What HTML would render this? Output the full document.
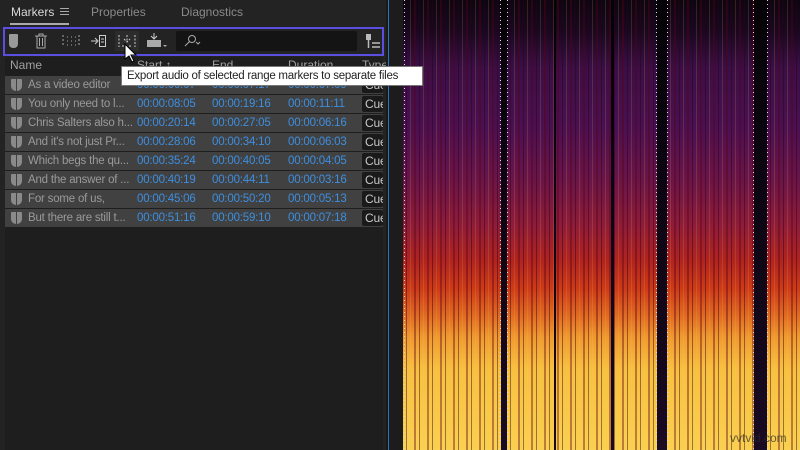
<!DOCTYPE html>
<html><head><meta charset="utf-8"><style>
*{margin:0;padding:0;box-sizing:border-box}
body{width:800px;height:450px;overflow:hidden;background:#232323;font-family:"Liberation Sans",sans-serif;position:relative}
.abs{position:absolute}
.tab{top:5px;font-size:12px;color:#8a8a8a}
.tbl{left:5px;top:57px;width:378px;height:393px;background:#1e1e1e}
.row{position:absolute;left:5px;width:378px;height:18px;background:#414141;font-size:11.5px;line-height:18px;letter-spacing:-0.2px}
.row .n{position:absolute;left:23px;color:#9a9a9a;white-space:nowrap}
.row .t{position:absolute;color:#3d8fe0}
.row .c{position:absolute;left:357px;top:1px;width:21px;height:16px;background:#1a1a1a;color:#c8c8c8;font-size:12px;line-height:16px;padding-left:3px;overflow:hidden;border-radius:2px}
.row .ic{position:absolute;left:6px;top:3px;width:11px;height:12px;background:#8a8a8a;border-radius:1px 1px 5px 5px}
.row .ic:after{content:"";position:absolute;left:5px;top:0;width:1px;height:12px;background:#414141}
.spec{left:403px;top:0;width:397px;height:450px;
background:linear-gradient(to bottom,#0d0610 0%,#1a0820 7%,#3a0f45 15%,#4a1050 28%,#6a1548 40%,#8e1c38 50%,#b0241f 58%,#cc3a18 64%,#e06a22 70%,#f09a30 75%,#f8c040 82%,#fad050 100%)}
.stripes{left:403px;top:0;width:397px;height:450px;
background:repeating-linear-gradient(90deg,rgba(0,0,0,0) 0 3px,rgba(40,0,30,.45) 3px 4px,rgba(0,0,0,0) 4px 7px,rgba(255,200,80,.15) 7px 8px,rgba(0,0,0,0) 8px 11px,rgba(90,0,20,.4) 11px 13px)}
.gap{top:0;height:450px;background:linear-gradient(to bottom,#050305,#0a0510 40%,#1a0a22 100%)}
.dot{top:0;height:450px;width:1px;background:repeating-linear-gradient(to bottom,#ddd 0 1px,transparent 1px 4px)}
</style></head><body>
<div class="abs tab" style="left:11px;color:#d8d8d8">Markers</div>
<div class="abs" style="left:60px;top:8px;width:9px;height:1px;background:#aaa;box-shadow:0 3px 0 #aaa,0 6px 0 #aaa"></div>
<div class="abs" style="left:10px;top:23px;width:59px;height:2px;background:#aaa"></div>
<div class="abs tab" style="left:91px">Properties</div>
<div class="abs tab" style="left:181px">Diagnostics</div>
<div class="abs" style="left:3px;top:27px;width:381px;height:29px;border:2px solid #5a4fe0"></div>
<div class="abs" style="left:9px;top:34px;width:9px;height:14px;background:#9a9a9a;border-radius:1px 1px 4px 4px"></div>
<svg class="abs" style="left:34px;top:33px" width="14" height="16"><path d="M1 3h12M5 3V1h4v2M3 3v12h8V3M5.5 5v8M8.5 5v8" stroke="#aaa" fill="none"/></svg>
<svg class="abs" style="left:62px;top:34px" width="18" height="14"><path d="M1 1v12M17 1v12M5 3h1M9 3h1M13 3h1M5 7h1M9 7h1M13 7h1M5 11h1M9 11h1M13 11h1" stroke="#aaa" stroke-dasharray="2 2" fill="none"/></svg>
<svg class="abs" style="left:90px;top:34px" width="18" height="14"><path d="M1 7h6M5 4l3 3-3 3" stroke="#ccc" fill="none"/><rect x="9.5" y="1.5" width="6" height="11" stroke="#ccc" fill="none"/><path d="M11 5h3M11 8h3" stroke="#ccc"/></svg>
<div class="abs" style="left:115px;top:31px;width:24px;height:20px;background:#2c2c2c"></div>
<svg class="abs" style="left:118px;top:34px" width="18" height="14"><path d="M1 1v12M17 1v12M9 1v7M6 5l3 3 3-3M4 12h10" stroke="#ccc" stroke-dasharray="2 1.5" fill="none"/></svg>
<svg class="abs" style="left:146px;top:32px" width="22" height="17"><path d="M8 1v6M5 4l3 3 3-3" stroke="#ccc" fill="none"/><rect x="1" y="8" width="14" height="7" fill="#aaa"/><path d="M17 13l2 2 2-2" fill="#aaa"/></svg>
<div class="abs" style="left:176px;top:31px;width:181px;height:20px;background:#141414;border-radius:2px"></div>
<svg class="abs" style="left:182px;top:34px" width="20" height="14"><circle cx="10" cy="5" r="3.5" stroke="#aaa" fill="none"/><path d="M7.5 7.5L3 12M14 8l2 2 2-2" stroke="#aaa" fill="none"/></svg>
<svg class="abs" style="left:365px;top:34px" width="16" height="16"><rect x="1" y="0" width="5" height="6" fill="#bbb"/><path d="M3.5 6v8M7 9h8M7 13h8" stroke="#bbb" stroke-width="1.5"/></svg>
<div class="tbl abs"></div>
<div class="abs" style="left:10px;top:58px;font-size:12px;color:#a0a0a0">Name</div>
<div class="abs" style="left:137px;top:58px;font-size:12px;color:#a0a0a0">Start ↑</div>
<div class="abs" style="left:212px;top:58px;font-size:12px;color:#a0a0a0">End</div>
<div class="abs" style="left:288px;top:58px;font-size:12px;color:#a0a0a0">Duration</div>
<div class="abs" style="left:362px;top:58px;font-size:12px;color:#a0a0a0">Type</div>
<div class="row" style="top:76px"><i class="ic"></i><span class="n">As a video editor</span><span class="t" style="left:132px">00:00:00:07</span><span class="t" style="left:207px">00:00:07:17</span><span class="t" style="left:283px">00:00:07:09</span><span class="c">Cue</span></div>
<div class="row" style="top:95px"><i class="ic"></i><span class="n">You only need to l...</span><span class="t" style="left:132px">00:00:08:05</span><span class="t" style="left:207px">00:00:19:16</span><span class="t" style="left:283px">00:00:11:11</span><span class="c">Cue</span></div>
<div class="row" style="top:114px"><i class="ic"></i><span class="n">Chris Salters also h...</span><span class="t" style="left:132px">00:00:20:14</span><span class="t" style="left:207px">00:00:27:05</span><span class="t" style="left:283px">00:00:06:16</span><span class="c">Cue</span></div>
<div class="row" style="top:133px"><i class="ic"></i><span class="n">And it's not just Pr...</span><span class="t" style="left:132px">00:00:28:06</span><span class="t" style="left:207px">00:00:34:10</span><span class="t" style="left:283px">00:00:06:03</span><span class="c">Cue</span></div>
<div class="row" style="top:152px"><i class="ic"></i><span class="n">Which begs the qu...</span><span class="t" style="left:132px">00:00:35:24</span><span class="t" style="left:207px">00:00:40:05</span><span class="t" style="left:283px">00:00:04:05</span><span class="c">Cue</span></div>
<div class="row" style="top:171px"><i class="ic"></i><span class="n">And the answer of ...</span><span class="t" style="left:132px">00:00:40:19</span><span class="t" style="left:207px">00:00:44:11</span><span class="t" style="left:283px">00:00:03:16</span><span class="c">Cue</span></div>
<div class="row" style="top:190px"><i class="ic"></i><span class="n">For some of us,</span><span class="t" style="left:132px">00:00:45:06</span><span class="t" style="left:207px">00:00:50:20</span><span class="t" style="left:283px">00:00:05:13</span><span class="c">Cue</span></div>
<div class="row" style="top:209px"><i class="ic"></i><span class="n">But there are still t...</span><span class="t" style="left:132px">00:00:51:16</span><span class="t" style="left:207px">00:00:59:10</span><span class="t" style="left:283px">00:00:07:18</span><span class="c">Cue</span></div>
<div class="abs" style="left:386px;top:0;width:3px;height:450px;background:#1a1a1a"></div>
<div class="abs" style="left:388px;top:0;width:1px;height:450px;background:#2f6fc0"></div>
<div class="abs" style="left:389px;top:0;width:14px;height:450px;background:#1c1c1c"></div>
<div class="abs spec"></div>
<div class="abs stripes"></div>
<div class="abs gap" style="left:501px;width:6px"></div>
<div class="abs gap" style="left:554px;width:2px"></div>
<div class="abs gap" style="left:611px;width:3px"></div>
<div class="abs gap" style="left:657px;width:10px"></div>
<div class="abs gap" style="left:754px;width:13px"></div>
<div class="abs dot" style="left:404px"></div>
<div class="abs dot" style="left:500px"></div>
<div class="abs dot" style="left:507px"></div>
<div class="abs dot" style="left:656px"></div>
<div class="abs dot" style="left:667px"></div>
<div class="abs dot" style="left:753px"></div>
<div class="abs dot" style="left:767px"></div>
<div class="abs" style="left:730px;top:431px;font-size:12px;color:rgba(40,40,40,.7)">vvtvid.com</div>
<div class="abs" style="left:121px;top:66px;width:302px;height:20px;background:#fff;border:1px solid #777;font-size:11.5px;letter-spacing:-0.25px;line-height:18px;padding-left:5px;color:#222;white-space:nowrap;overflow:hidden">Export audio of selected range markers to separate files</div>
<svg class="abs" style="left:124px;top:43px" width="14" height="20"><path d="M1 1v15l4-3 3 6 2-1-3-6h5z" fill="#fff" stroke="#000"/></svg>
</body></html>
